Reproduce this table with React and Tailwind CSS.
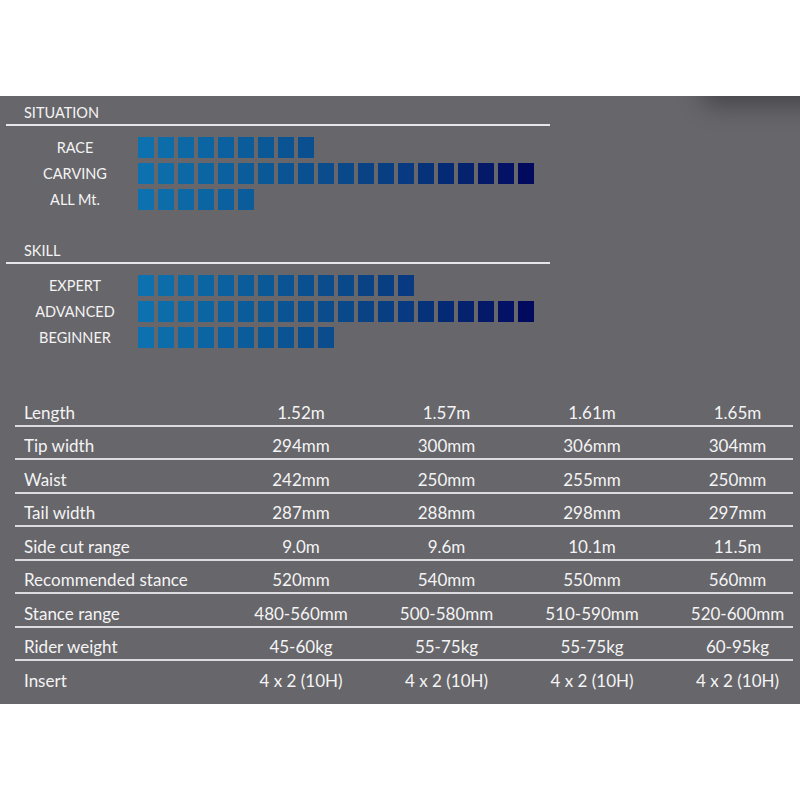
import React from "react";

const stops = [
  [0, [12, 113, 174]],
  [9, [10, 76, 140]],
  [13, [7, 58, 128]],
  [19, [2, 10, 94]],
];

function colorAt(i) {
  for (let k = 0; k < stops.length - 1; k++) {
    const [a, ca] = stops[k];
    const [b, cb] = stops[k + 1];
    if (i >= a && i <= b) {
      const t = (i - a) / (b - a);
      const c = ca.map((v, j) => Math.round(v + (cb[j] - v) * t));
      return `rgb(${c[0]},${c[1]},${c[2]})`;
    }
  }
  return "rgb(2,10,94)";
}

function BarRow({ label, count }) {
  return (
    <div className="flex items-center h-[21px]">
      <div className="ml-[12px] w-[126px] text-center text-[14.5px] leading-[21px] text-[#f4f4f4]">{label}</div>
      <div className="flex gap-[4px]">
        {Array.from({ length: count }).map((_, i) => (
          <div key={i} className="w-[16px] h-[21px]" style={{ backgroundColor: colorAt(i) }} />
        ))}
      </div>
    </div>
  );
}

function Header({ title }) {
  return (
    <div>
      <div className="pl-6 text-[14.5px] leading-[20px] text-[#f4f4f4]">{title}</div>
      <div className="mt-[1px] ml-[6px] w-[544px] h-[2px] bg-[#e6e6e8]" />
    </div>
  );
}

const rows = [
  ["Length", "1.52m", "1.57m", "1.61m", "1.65m"],
  ["Tip width", "294mm", "300mm", "306mm", "304mm"],
  ["Waist", "242mm", "250mm", "255mm", "250mm"],
  ["Tail width", "287mm", "288mm", "298mm", "297mm"],
  ["Side cut range", "9.0m", "9.6m", "10.1m", "11.5m"],
  ["Recommended stance", "520mm", "540mm", "550mm", "560mm"],
  ["Stance range", "480-560mm", "500-580mm", "510-590mm", "520-600mm"],
  ["Rider weight", "45-60kg", "55-75kg", "55-75kg", "60-95kg"],
  ["Insert", "4 x 2 (10H)", "4 x 2 (10H)", "4 x 2 (10H)", "4 x 2 (10H)"],
];

export default function App() {
  return (
    <div className="w-[800px] h-[800px] bg-white font-['Lato',sans-serif] overflow-hidden">
      <div className="h-[96px]" />
      <div className="relative h-[608px] bg-[#67666b] overflow-hidden">
        <div className="absolute -top-[24px] -right-[40px] w-[140px] h-[34px] rounded-full bg-[#38373c] blur-[12px] opacity-70" />
        <div className="relative pt-[7px]">
          <Header title="SITUATION" />
          <div className="mt-[11px] flex flex-col gap-[5px]">
            <BarRow label="RACE" count={9} />
            <BarRow label="CARVING" count={20} />
            <BarRow label="ALL Mt." count={6} />
          </div>
          <div className="mt-[31px]">
            <Header title="SKILL" />
          </div>
          <div className="mt-[11px] flex flex-col gap-[5px]">
            <BarRow label="EXPERT" count={14} />
            <BarRow label="ADVANCED" count={20} />
            <BarRow label="BEGINNER" count={10} />
          </div>
          <div className="mt-[45px]">
            {rows.map((r, idx) => (
              <div
                key={r[0]}
                className={`ml-[15px] w-[778px] h-[33.5px] pt-[6.5px] ${idx < rows.length - 1 ? "border-b-2 border-[#dcdcde]" : ""}`}
              >
                <div className="h-[25px] pl-[9px] grid grid-cols-[191.5px_120px_120px_120px_120px] gap-x-[25.5px] items-center text-[17px] leading-[25px] text-[#f4f4f4]">
                  <div className="whitespace-nowrap">{r[0]}</div>
                  {r.slice(1).map((v, j) => (
                    <div key={j} className="text-center whitespace-nowrap">{v}</div>
                  ))}
                </div>
              </div>
            ))}
          </div>
        </div>
      </div>
    </div>
  );
}
